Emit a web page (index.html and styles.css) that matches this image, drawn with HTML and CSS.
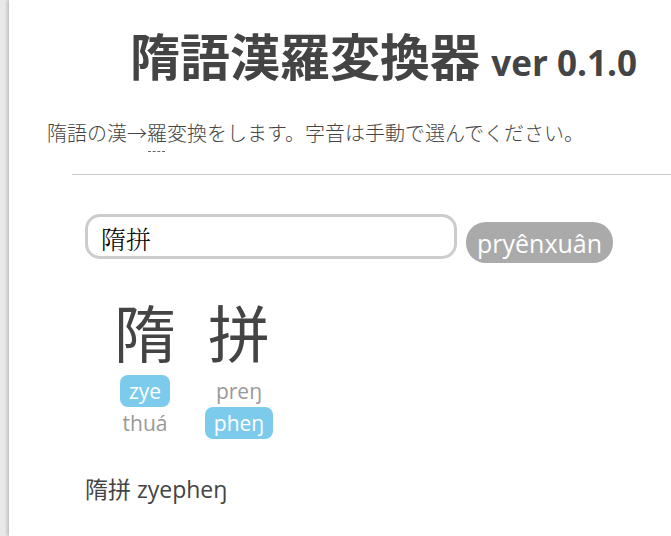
FILE: index.html
```html
<!DOCTYPE html>
<html lang="ja">
<head>
<meta charset="utf-8">
<link rel="stylesheet" href="styles.css">
</head>
<body>
<div class="page">
  <header class="head">
    <h1 class="title">隋語漢羅変換器 <small class="ver">ver 0.1.0</small></h1>
    <p class="lead">隋語の漢→<span class="mark">羅</span>変換をします。字音は手動で選んでください。</p>
  </header>
  <hr class="rule">
  <section class="tool">
    <div class="form">
      <div class="field">隋拼</div>
      <button class="btn">pryênxuân</button>
    </div>
    <div class="chars">
      <div class="col">
        <div class="han">隋</div>
        <div class="opts">
          <span class="opt on">zye</span>
          <span class="opt">thuá</span>
        </div>
      </div>
      <div class="col">
        <div class="han">拼</div>
        <div class="opts">
          <span class="opt">preŋ</span>
          <span class="opt on">pheŋ</span>
        </div>
      </div>
    </div>
    <p class="result">隋拼 zyepheŋ</p>
  </section>
</div>
</body>
</html>
```
FILE: styles.css
```css
html, body {
  margin: 0;
  padding: 0;
  height: 100%;
}
body {
  background: #e9e9e9;
  font-family: "Open Sans", "Noto Sans CJK JP", sans-serif;
  color: #444;
}
.page {
  margin-left: 9px;
  min-height: 100%;
  background: #fff;
  box-shadow: -2px 0 3px rgba(0,0,0,0.18);
  overflow: hidden;
}
.head {
  padding: 20px 0 0 38px;
}
.title {
  margin: 0;
  padding-left: 83px;
  font-size: 50px;
  font-weight: 700;
  line-height: 68px;
  font-family: "Noto Sans CJK JP", sans-serif;
}
.ver {
  font-family: "Open Sans", sans-serif;
  font-size: 35px;
  font-weight: 700;
}
.lead {
  margin: 22px 0 0 0;
  font-size: 20px;
  line-height: 28px;
  font-family: "Noto Sans CJK JP", sans-serif;
  font-weight: 300;
}
.mark {
  position: relative;
}
.mark::after {
  content: "";
  position: absolute;
  left: 1px;
  right: 2px;
  bottom: -5px;
  border-bottom: 1px dashed #666;
}
.rule {
  border: 0;
  border-top: 1px solid #ccc;
  margin: 27px 0 0 63px;
}
.tool {
  padding: 39px 0 0 76px;
}
.form {
  display: flex;
  align-items: flex-start;
  gap: 9px;
}
.field {
  box-sizing: border-box;
  width: 372px;
  height: 45px;
  border: 3px solid #ccc;
  border-radius: 15px;
  padding: 0 0 0 13px;
  font-family: "Noto Serif CJK JP", "Liberation Serif", serif;
  font-size: 25px;
  font-weight: 300;
  line-height: 42px;
  color: #000;
}
.btn {
  margin-top: 8px;
  height: 41px;
  padding: 0 11px;
  border: 0;
  border-radius: 20px;
  background: #aaa;
  color: #fff;
  font-family: "Open Sans", sans-serif;
  font-size: 25px;
}
.chars {
  display: flex;
  gap: 28px;
  padding: 29px 0 0 27px;
}
.col {
  display: flex;
  flex-direction: column;
  align-items: center;
  width: 66px;
}
.han {
  font-size: 62px;
  line-height: 78px;
  font-family: "Noto Sans CJK JP", sans-serif;
  font-weight: 400;
}
.opts {
  display: flex;
  flex-direction: column;
  align-items: center;
  margin-top: 5px;
}
.opt {
  font-size: 21px;
  line-height: 32px;
  color: #999;
  padding: 0 9px;
  border-radius: 8px;
}
.opt.on {
  background: #7dcbec;
  color: #fff;
}
.result {
  margin: 35px 0 0 0;
  font-size: 23px;
  line-height: 30px;
}
```
